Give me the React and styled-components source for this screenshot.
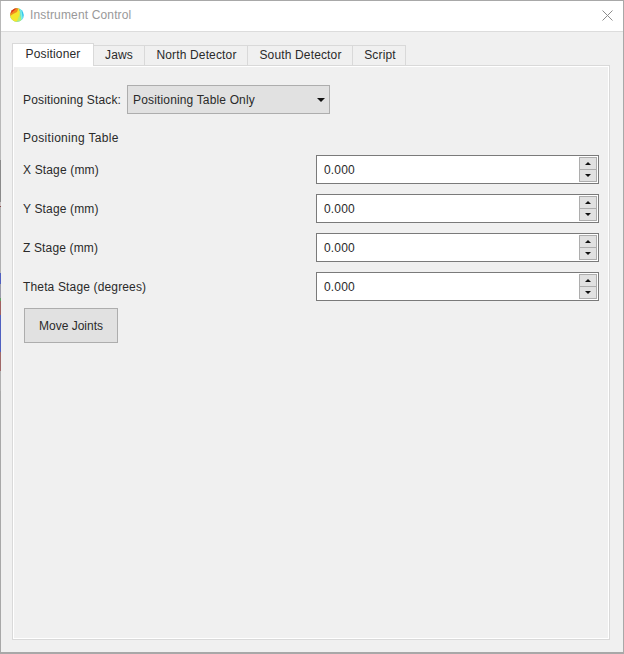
import React from 'react';
import styled, { createGlobalStyle } from 'styled-components';

const GlobalStyle = createGlobalStyle`
  html, body {
    margin: 0;
    padding: 0;
    background: #f0f0f0;
  }
  * {
    box-sizing: border-box;
  }
`;

const Window = styled.div`
  width: 624px;
  height: 654px;
  position: relative;
  display: flex;
  flex-direction: column;
  background: #f0f0f0;
  border: 1px solid #a8a8a8;
  border-bottom-width: 2px;
  font-family: "Liberation Sans", Arial, sans-serif;
  font-size: 12px;
  letter-spacing: 0.15px;
  color: #2a2a2a;

  &::before {
    content: '';
    position: absolute;
    left: -1px;
    top: 0;
    width: 1px;
    height: 390px;
    background: linear-gradient(
      to bottom,
      #b8b8b8 0 159px,
      #8a8a8a 159px 201px,
      #c8c0c0 201px 205px,
      #8a4a4a 205px 206px,
      #b0b0b0 206px 272px,
      #5060c0 272px 283px,
      #9a9aa8 283px 297px,
      #60a060 297px 300px,
      #a06060 300px 314px,
      #5060c0 314px 351px,
      #a06868 351px 370px,
      #b0b0b0 370px
    );
  }
`;

const TitleBar = styled.div`
  height: 31px;
  flex-shrink: 0;
  display: flex;
  align-items: center;
  padding: 0 10px 2px 9px;
  background: #fff;
  border-bottom: 1px solid #dcdcdc;
`;

const Title = styled.span`
  margin-left: 6px;
  color: #999;
  flex: 1;
`;

const Body = styled.div`
  flex: 1;
  display: flex;
  flex-direction: column;
  padding: 11px 13px 12px 11px;
  min-height: 0;
`;

const TabBar = styled.div`
  display: flex;
  align-items: flex-end;
  height: 23px;
  flex-shrink: 0;
  margin-bottom: -1px;
  position: relative;
  z-index: 1;
`;

const Tab = styled.div`
  height: ${props => (props.$active ? '23px' : '21px')};
  width: ${props => props.$width}px;
  display: flex;
  align-items: center;
  justify-content: center;
  padding: 0 0 2px ${props => props.$nudge || 0}px;
  background: ${props => (props.$active ? '#fff' : '#f0f0f0')};
  border: 1px solid #d9d9d9;
  border-left-width: ${props => (props.$active ? '1px' : '0')};
  border-bottom-width: ${props => (props.$active ? '0' : '1px')};
`;

const Pane = styled.div`
  flex: 1;
  display: flex;
  flex-direction: column;
  background: #f0f0f0;
  border: 1px solid #d9d9d9;
  box-shadow: inset 0 0 0 1px #fff;
  padding: 19px 10px 0 10px;
  min-height: 0;
`;

const StackRow = styled.div`
  display: flex;
  align-items: center;
  gap: 6px;
  height: 29px;
`;

const Dropdown = styled.div`
  width: 203px;
  height: 29px;
  display: flex;
  align-items: center;
  justify-content: space-between;
  padding: 0 4px 0 5px;
  background: #e1e1e1;
  border: 1px solid #adadad;
`;

const Arrow = styled.span`
  width: 0;
  height: 0;
  border-left: ${props => props.$size}px solid transparent;
  border-right: ${props => props.$size}px solid transparent;
  ${props => (props.$up ? 'border-bottom' : 'border-top')}: ${props => props.$height}px solid #111;
`;

const SectionLabel = styled.div`
  height: 14px;
  margin: 17px 0 10px;
  line-height: 14px;
  letter-spacing: 0.3px;
`;

const StageList = styled.div`
  display: flex;
  flex-direction: column;
  gap: 10px;
`;

const StageRow = styled.div`
  display: flex;
  align-items: center;
  justify-content: space-between;
  height: 29px;
`;

const SpinBox = styled.div`
  width: 283px;
  height: 29px;
  display: flex;
  align-items: center;
  justify-content: space-between;
  padding: 0 1px 0 7px;
  background: #fff;
  border: 1px solid #7a7a7a;
`;

const SpinButtons = styled.div`
  display: flex;
  flex-direction: column;
  width: 18px;
  height: 25px;
`;

const SpinButton = styled.div`
  flex: 1;
  display: flex;
  align-items: center;
  justify-content: center;
  background: #e1e1e1;
  border: 1px solid #adadad;
  & + & {
    border-top-width: 0;
  }
`;

const MoveButton = styled.div`
  width: 94px;
  height: 35px;
  margin: 7px 0 0 1px;
  display: flex;
  align-items: center;
  justify-content: center;
  letter-spacing: 0;
  background: #e1e1e1;
  border: 1px solid #adadad;
`;

const AppIcon = () => (
  <svg width="14" height="14" viewBox="0 0 14 14">
    <defs>
      <clipPath id="disc">
        <circle cx="7" cy="7" r="6.8" />
      </clipPath>
    </defs>
    <g clipPath="url(#disc)">
      <rect width="14" height="14" fill="#33c6ee" />
      <path d="M0 14V3H10L11.5 14Z" fill="#b6ec72" />
      <path d="M0 10V0H9.5L9.5 7L6.5 14H2Z" fill="#f6e62c" />
      <path d="M0 8V0H8.5L7 4L3 6Z" fill="#f08a1e" />
      <path d="M0 6V0H7L4 2.5Z" fill="#dd2a20" />
      <path d="M9.8 0H11L13.5 14H11.5Z" fill="#7ff0e6" />
    </g>
  </svg>
);

const CloseIcon = () => (
  <svg width="11" height="11" viewBox="0 0 11 11">
    <path d="M0.5 0.5L10.5 10.5M10.5 0.5L0.5 10.5" stroke="#8c8c8c" strokeWidth="1" fill="none" />
  </svg>
);

const tabs = [
  { label: 'Positioner', width: 82 },
  { label: 'Jaws', width: 51 },
  { label: 'North Detector', width: 103, nudge: 1 },
  { label: 'South Detector', width: 105, nudge: 1 },
  { label: 'Script', width: 53, nudge: 2 },
];

const stages = ['X Stage (mm)', 'Y Stage (mm)', 'Z Stage (mm)', 'Theta Stage (degrees)'];

const App = () => (
  <>
    <GlobalStyle />
    <Window>
      <TitleBar>
        <AppIcon />
        <Title>Instrument Control</Title>
        <CloseIcon />
      </TitleBar>
      <Body>
        <TabBar>
          {tabs.map((tab, i) => (
            <Tab key={tab.label} $width={tab.width} $active={i === 0} $nudge={tab.nudge}>
              {tab.label}
            </Tab>
          ))}
        </TabBar>
        <Pane>
          <StackRow>
            <span>Positioning Stack:</span>
            <Dropdown>
              Positioning Table Only
              <Arrow $size={4} $height={4} />
            </Dropdown>
          </StackRow>
          <SectionLabel>Positioning Table</SectionLabel>
          <StageList>
            {stages.map(stage => (
              <StageRow key={stage}>
                <span>{stage}</span>
                <SpinBox>
                  0.000
                  <SpinButtons>
                    <SpinButton>
                      <Arrow $size={3.5} $height={3} $up />
                    </SpinButton>
                    <SpinButton>
                      <Arrow $size={3.5} $height={3} />
                    </SpinButton>
                  </SpinButtons>
                </SpinBox>
              </StageRow>
            ))}
          </StageList>
          <MoveButton>Move Joints</MoveButton>
        </Pane>
      </Body>
    </Window>
  </>
);

export default App;
